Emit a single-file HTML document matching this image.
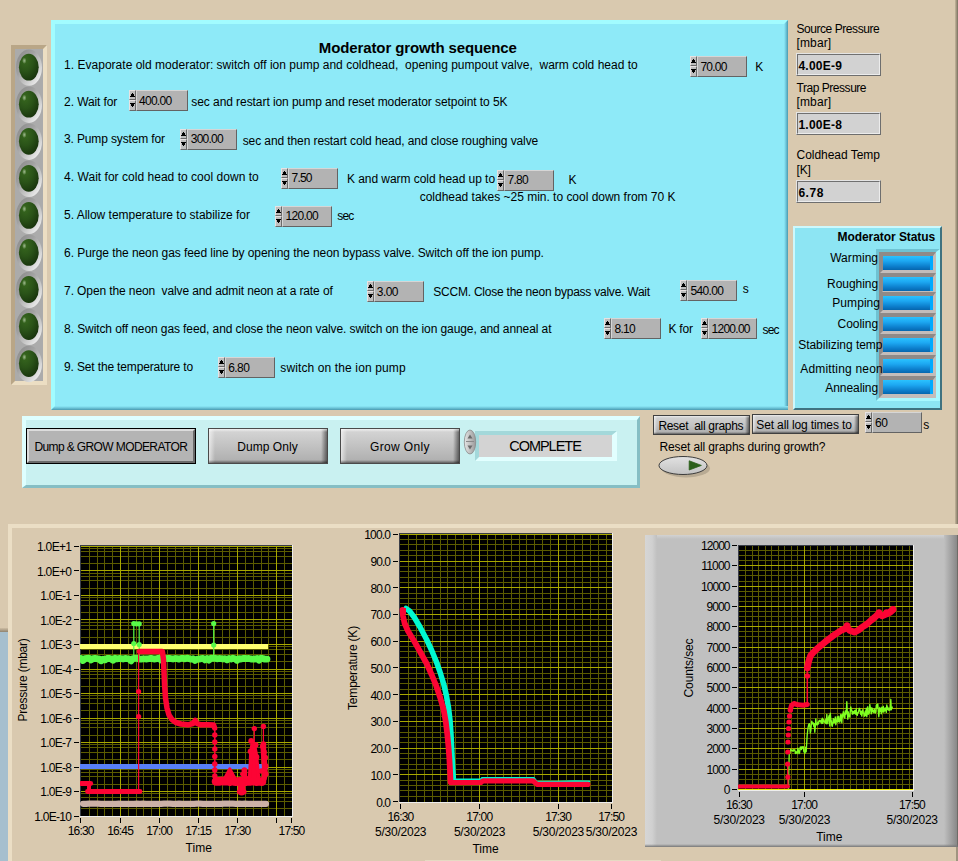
<!DOCTYPE html>
<html><head><meta charset="utf-8"><title>Moderator growth sequence</title>
<style>
html,body{margin:0;padding:0}
body{width:958px;height:861px;background:#D9C9AF;position:relative;overflow:hidden;
 font-family:"Liberation Sans",sans-serif;font-size:12px;color:#000;line-height:1}
.a{position:absolute}
.t{position:absolute;white-space:pre;line-height:1}
.num{position:absolute;height:21px}
.num .sp{position:absolute;left:0;top:0;width:7px;height:21px;background:#C8C8C8}
.num .sp i{position:absolute;left:0;width:7px;box-sizing:border-box;background:#BEBEBE;border-top:1px solid #E8E2E2;border-left:1px solid #E8E2E2;border-bottom:1px solid #6A6A6A;border-right:1px solid #6A6A6A}
.num .sp i.u{top:0;height:10px}
.num .sp i.d{top:10px;height:11px}
.num .sp i:after{content:"";position:absolute;left:2px;width:1px;height:1px;background:#000}
.num .sp i.u:after{top:2px;box-shadow:-1px 1px #000,0 1px #000,1px 1px #000,-1px 2px #000,0 2px #000,1px 2px #000,-2px 3px #000,-1px 3px #000,0 3px #000,1px 3px #000,2px 3px #000}
.num .sp i.d:after{top:5px;box-shadow:-1px -1px #000,0 -1px #000,1px -1px #000,-1px -2px #000,0 -2px #000,1px -2px #000,-2px -3px #000,-1px -3px #000,0 -3px #000,1px -3px #000,2px -3px #000}
.num .f{position:absolute;left:7px;top:0;height:21px;box-sizing:border-box;background:#B3B3B3;border-top:1px solid #D6D6D6;border-left:1px solid #D6D6D6;border-bottom:1px solid #636363;border-right:1px solid #636363}
.ind{position:absolute;box-sizing:border-box;background:#D2D2D2;border:1px solid;border-color:#E4E4E4 #6E6E6E #6E6E6E #E4E4E4}
.ind:after{content:"";position:absolute;left:0;top:0;right:0;bottom:0;border:1px solid;border-color:#707070 #ECECEC #ECECEC #707070}
.btn{position:absolute;box-sizing:border-box;border:1px solid #4A4A4A;background:linear-gradient(#D6D6D6,#C4C4C4 45%,#ADADAD)}
</style></head>
<body>
<div class="a" style="left:51px;top:20px;width:737px;height:390px;background:#8EEAF8;box-sizing:border-box;border-style:solid;border-width:4px 0 0 4px;border-color:#A2FCFF"></div>
<div class="a" style="left:784px;top:20px;width:4px;height:390px;background:linear-gradient(90deg,#8EEAF8,#6CC4D8 50%,#4A99AF)"></div>
<div class="a" style="left:51px;top:406px;width:737px;height:4px;background:linear-gradient(#8EEAF8,#6CC4D8 50%,#4A99AF)"></div>
<div class="a" style="left:51px;top:406px;width:0;height:0;border-left:4px solid #A2FCFF;border-bottom:4px solid transparent"></div>
<div class="a" style="left:784px;top:20px;width:0;height:0;border-top:4px solid #A2FCFF;border-right:4px solid transparent"></div>
<div class="a" style="left:11px;top:45px;width:36px;height:340px;box-sizing:border-box;background:#ABABAB;border-style:solid;border-width:4px;border-color:#B9A687 #ECDEC3 #ECDEC3 #B9A687"></div>
<svg class="a" style="left:12px;top:46px" width="35" height="340" viewBox="12 46 35 340"><defs><linearGradient id="bz" x1="0" y1="0" x2="1" y2="1"><stop offset="0" stop-color="#868686"/><stop offset=".38" stop-color="#A2A2A2"/><stop offset=".62" stop-color="#C6C6C6"/><stop offset="1" stop-color="#FFFFFF"/></linearGradient><radialGradient id="lg" cx=".32" cy=".25" r=".9"><stop offset="0" stop-color="#38681F"/><stop offset=".45" stop-color="#2A5318"/><stop offset="1" stop-color="#142C0A"/></radialGradient><radialGradient id="hl" cx=".5" cy=".5" r=".5"><stop offset="0" stop-color="#C9DDBC" stop-opacity=".7"/><stop offset="1" stop-color="#DDEBD2" stop-opacity="0"/></radialGradient></defs><ellipse cx="29" cy="67.6" rx="13" ry="18.2" fill="url(#bz)"/><ellipse cx="28.8" cy="67.2" rx="9.9" ry="13.4" fill="url(#lg)"/><ellipse cx="24.3" cy="60.7" rx="2.2" ry="3.2" fill="url(#hl)"/><ellipse cx="29" cy="104.7" rx="13" ry="18.2" fill="url(#bz)"/><ellipse cx="28.8" cy="104.2" rx="9.9" ry="13.4" fill="url(#lg)"/><ellipse cx="24.3" cy="97.8" rx="2.2" ry="3.2" fill="url(#hl)"/><ellipse cx="29" cy="141.7" rx="13" ry="18.2" fill="url(#bz)"/><ellipse cx="28.8" cy="141.3" rx="9.9" ry="13.4" fill="url(#lg)"/><ellipse cx="24.3" cy="134.8" rx="2.2" ry="3.2" fill="url(#hl)"/><ellipse cx="29" cy="178.8" rx="13" ry="18.2" fill="url(#bz)"/><ellipse cx="28.8" cy="178.3" rx="9.9" ry="13.4" fill="url(#lg)"/><ellipse cx="24.3" cy="171.8" rx="2.2" ry="3.2" fill="url(#hl)"/><ellipse cx="29" cy="215.8" rx="13" ry="18.2" fill="url(#bz)"/><ellipse cx="28.8" cy="215.4" rx="9.9" ry="13.4" fill="url(#lg)"/><ellipse cx="24.3" cy="208.9" rx="2.2" ry="3.2" fill="url(#hl)"/><ellipse cx="29" cy="252.8" rx="13" ry="18.2" fill="url(#bz)"/><ellipse cx="28.8" cy="252.4" rx="9.9" ry="13.4" fill="url(#lg)"/><ellipse cx="24.3" cy="245.9" rx="2.2" ry="3.2" fill="url(#hl)"/><ellipse cx="29" cy="289.9" rx="13" ry="18.2" fill="url(#bz)"/><ellipse cx="28.8" cy="289.5" rx="9.9" ry="13.4" fill="url(#lg)"/><ellipse cx="24.3" cy="283.0" rx="2.2" ry="3.2" fill="url(#hl)"/><ellipse cx="29" cy="326.9" rx="13" ry="18.2" fill="url(#bz)"/><ellipse cx="28.8" cy="326.5" rx="9.9" ry="13.4" fill="url(#lg)"/><ellipse cx="24.3" cy="320.0" rx="2.2" ry="3.2" fill="url(#hl)"/><ellipse cx="29" cy="364.0" rx="13" ry="18.2" fill="url(#bz)"/><ellipse cx="28.8" cy="363.6" rx="9.9" ry="13.4" fill="url(#lg)"/><ellipse cx="24.3" cy="357.1" rx="2.2" ry="3.2" fill="url(#hl)"/></svg>
<div class="num" style="left:690px;top:56px;width:57px"><div class="sp"><i class="u"></i><i class="d"></i></div><div class="f" style="width:50px"></div></div>
<div class="num" style="left:129px;top:90px;width:59px"><div class="sp"><i class="u"></i><i class="d"></i></div><div class="f" style="width:52px"></div></div>
<div class="num" style="left:180px;top:129px;width:57px"><div class="sp"><i class="u"></i><i class="d"></i></div><div class="f" style="width:50px"></div></div>
<div class="num" style="left:281px;top:168px;width:57px"><div class="sp"><i class="u"></i><i class="d"></i></div><div class="f" style="width:50px"></div></div>
<div class="num" style="left:497px;top:170px;width:57px"><div class="sp"><i class="u"></i><i class="d"></i></div><div class="f" style="width:50px"></div></div>
<div class="num" style="left:275px;top:206px;width:57px"><div class="sp"><i class="u"></i><i class="d"></i></div><div class="f" style="width:50px"></div></div>
<div class="num" style="left:367px;top:281px;width:57px"><div class="sp"><i class="u"></i><i class="d"></i></div><div class="f" style="width:50px"></div></div>
<div class="num" style="left:680px;top:280px;width:57px"><div class="sp"><i class="u"></i><i class="d"></i></div><div class="f" style="width:50px"></div></div>
<div class="num" style="left:604px;top:318px;width:57px"><div class="sp"><i class="u"></i><i class="d"></i></div><div class="f" style="width:50px"></div></div>
<div class="num" style="left:701px;top:318px;width:56px"><div class="sp"><i class="u"></i><i class="d"></i></div><div class="f" style="width:49px"></div></div>
<div class="num" style="left:218px;top:357px;width:57px"><div class="sp"><i class="u"></i><i class="d"></i></div><div class="f" style="width:50px"></div></div>
<div class="ind" style="left:796px;top:53px;width:85px;height:23px"></div>
<div class="ind" style="left:796px;top:112px;width:85px;height:23px"></div>
<div class="ind" style="left:796px;top:180px;width:85px;height:23px"></div>
<div class="a" style="left:793px;top:226px;width:149px;height:184px;background:#8DE5F3;box-sizing:border-box;border-style:solid;border-width:2px 2px 2px 2px;border-color:#CDF8FC #3F7280 #3F7280 #CDF8FC"></div>
<div class="a" style="left:876px;top:249px;width:64px;height:152px;box-sizing:border-box;background:#8DE5F3;border-style:solid;border-width:3px 4px 3px 3px;border-color:#6FC2D2 #A8F8FF #A8F8FF #6FC2D2"></div>
<div class="a" style="left:879px;top:252px;width:57px;height:22px;box-sizing:border-box;border-style:solid;border-width:4px 3px 4px 4px;border-color:#8F8A88 #C3BDBB #C3BDBB #8F8A88;background:linear-gradient(#2AC2FF,#1DA8F2 35%,#0C7DCB 75%,#0566AE)"><div class="a" style="right:0;top:0;width:3px;height:14px;background:#00AAFF"></div></div>
<div class="a" style="left:879px;top:273px;width:57px;height:22px;box-sizing:border-box;border-style:solid;border-width:4px 3px 4px 4px;border-color:#8F8A88 #C3BDBB #C3BDBB #8F8A88;background:linear-gradient(#2AC2FF,#1DA8F2 35%,#0C7DCB 75%,#0566AE)"><div class="a" style="right:0;top:0;width:3px;height:14px;background:#00AAFF"></div></div>
<div class="a" style="left:879px;top:292px;width:57px;height:22px;box-sizing:border-box;border-style:solid;border-width:4px 3px 4px 4px;border-color:#8F8A88 #C3BDBB #C3BDBB #8F8A88;background:linear-gradient(#2AC2FF,#1DA8F2 35%,#0C7DCB 75%,#0566AE)"><div class="a" style="right:0;top:0;width:3px;height:14px;background:#00AAFF"></div></div>
<div class="a" style="left:879px;top:313px;width:57px;height:22px;box-sizing:border-box;border-style:solid;border-width:4px 3px 4px 4px;border-color:#8F8A88 #C3BDBB #C3BDBB #8F8A88;background:linear-gradient(#2AC2FF,#1DA8F2 35%,#0C7DCB 75%,#0566AE)"><div class="a" style="right:0;top:0;width:3px;height:14px;background:#00AAFF"></div></div>
<div class="a" style="left:879px;top:334px;width:57px;height:22px;box-sizing:border-box;border-style:solid;border-width:4px 3px 4px 4px;border-color:#8F8A88 #C3BDBB #C3BDBB #8F8A88;background:linear-gradient(#2AC2FF,#1DA8F2 35%,#0C7DCB 75%,#0566AE)"><div class="a" style="right:0;top:0;width:3px;height:14px;background:#00AAFF"></div></div>
<div class="a" style="left:879px;top:355px;width:57px;height:22px;box-sizing:border-box;border-style:solid;border-width:4px 3px 4px 4px;border-color:#8F8A88 #C3BDBB #C3BDBB #8F8A88;background:linear-gradient(#2AC2FF,#1DA8F2 35%,#0C7DCB 75%,#0566AE)"><div class="a" style="right:0;top:0;width:3px;height:14px;background:#00AAFF"></div></div>
<div class="a" style="left:879px;top:376px;width:57px;height:22px;box-sizing:border-box;border-style:solid;border-width:4px 3px 4px 4px;border-color:#8F8A88 #C3BDBB #C3BDBB #8F8A88;background:linear-gradient(#2AC2FF,#1DA8F2 35%,#0C7DCB 75%,#0566AE)"><div class="a" style="right:0;top:0;width:3px;height:14px;background:#00AAFF"></div></div>
<div class="a" style="left:22px;top:416px;width:618px;height:72px;background:#C9F1F1;box-sizing:border-box;border-style:solid;border-width:4px 3px 3px 4px;border-color:#DEFFFF #86BEC4 #86BEC4 #DEFFFF"></div>
<div class="a" style="left:26px;top:428px;width:170px;height:36px;box-sizing:border-box;border:1px solid #000;background:#000"><div class="a" style="left:0;top:0;right:0;bottom:0;background:#B4B4B4;border-style:solid;border-width:2px;border-color:#DCDCDC #6A6A6A #6A6A6A #DCDCDC"></div></div>
<div class="btn" style="left:208px;top:428px;width:120px;height:36px"><div class="a" style="left:0;top:0;width:6px;height:100%;background:linear-gradient(90deg,rgba(255,255,255,.6),rgba(255,255,255,0))"></div><div class="a" style="right:0;top:0;width:6px;height:100%;background:linear-gradient(90deg,rgba(0,0,0,0),rgba(0,0,0,.5))"></div><div class="a" style="left:0;top:0;width:100%;height:3px;background:linear-gradient(rgba(255,255,255,.6),rgba(255,255,255,0))"></div><div class="a" style="left:0;bottom:0;width:100%;height:3px;background:linear-gradient(rgba(0,0,0,0),rgba(0,0,0,.45))"></div></div>
<div class="btn" style="left:340px;top:428px;width:120px;height:36px"><div class="a" style="left:0;top:0;width:6px;height:100%;background:linear-gradient(90deg,rgba(255,255,255,.6),rgba(255,255,255,0))"></div><div class="a" style="right:0;top:0;width:6px;height:100%;background:linear-gradient(90deg,rgba(0,0,0,0),rgba(0,0,0,.5))"></div><div class="a" style="left:0;top:0;width:100%;height:3px;background:linear-gradient(rgba(255,255,255,.6),rgba(255,255,255,0))"></div><div class="a" style="left:0;bottom:0;width:100%;height:3px;background:linear-gradient(rgba(0,0,0,0),rgba(0,0,0,.45))"></div></div>
<div class="a" style="left:475px;top:431px;width:142px;height:30px;box-sizing:border-box;background:#D3D3D3;border-style:solid;border-width:4px 5px 4px 4px;border-color:#A3D8DA #E2FFFF #E2FFFF #A3D8DA"></div>
<svg class="a" style="left:463px;top:429px" width="14" height="26" viewBox="0 0 14 26"><defs><linearGradient id="rg" x1="0" y1="0" x2="1" y2="0"><stop offset="0" stop-color="#E6E6E6"/><stop offset="1" stop-color="#9A9A9A"/></linearGradient></defs><ellipse cx="7" cy="13" rx="5.7" ry="12" fill="url(#rg)" stroke="#8A8A8A" stroke-width=".8"/><path d="M3 12.5H11" stroke="#8A8A8A" stroke-width="1"/><path d="M7 5.5L9.5 9.5H4.5Z M7 20.5L9.5 16.5H4.5Z" fill="#6A6A6A"/></svg>
<div class="a" style="left:653px;top:415px;width:97px;height:20px;box-sizing:border-box;border:1px solid #404040;background:linear-gradient(#D2D2D2,#C4C4C4 50%,#ABABAB)"><div class="a" style="left:0;top:0;width:3px;height:100%;background:linear-gradient(90deg,rgba(255,255,255,.6),rgba(255,255,255,0))"></div><div class="a" style="right:0;top:0;width:4px;height:100%;background:linear-gradient(90deg,rgba(0,0,0,0),rgba(0,0,0,.5))"></div><div class="a" style="left:0;top:0;width:100%;height:2px;background:linear-gradient(rgba(255,255,255,.55),rgba(255,255,255,0))"></div><div class="a" style="left:0;bottom:0;width:100%;height:2px;background:linear-gradient(rgba(0,0,0,0),rgba(0,0,0,.45))"></div></div>
<div class="a" style="left:752px;top:414px;width:107px;height:20px;box-sizing:border-box;border:1px solid #404040;background:linear-gradient(#D2D2D2,#C4C4C4 50%,#ABABAB)"><div class="a" style="left:0;top:0;width:3px;height:100%;background:linear-gradient(90deg,rgba(255,255,255,.6),rgba(255,255,255,0))"></div><div class="a" style="right:0;top:0;width:4px;height:100%;background:linear-gradient(90deg,rgba(0,0,0,0),rgba(0,0,0,.5))"></div><div class="a" style="left:0;top:0;width:100%;height:2px;background:linear-gradient(rgba(255,255,255,.55),rgba(255,255,255,0))"></div><div class="a" style="left:0;bottom:0;width:100%;height:2px;background:linear-gradient(rgba(0,0,0,0),rgba(0,0,0,.45))"></div></div>
<div class="num" style="left:865px;top:412px;width:57px"><div class="sp"><i class="u"></i><i class="d"></i></div><div class="f" style="width:50px"></div></div>
<svg class="a" style="left:655px;top:453px" width="60" height="28" viewBox="655 453 60 28"><defs><linearGradient id="ov" x1="0" y1="0" x2="0" y2="1"><stop offset="0" stop-color="#E2E2E2"/><stop offset="1" stop-color="#C2C2C2"/></linearGradient></defs><ellipse cx="686" cy="468.5" rx="24" ry="9" fill="#9C8F7B" opacity=".55"/><ellipse cx="683" cy="465.5" rx="24" ry="9" fill="url(#ov)" stroke="#3C3C3C" stroke-width="1"/><path d="M689.2 460.8L701.4 465.4L689.2 470Z" fill="#2B5F19" stroke="#2B5F19" stroke-width=".8" stroke-linejoin="round"/></svg>
<div class="a" style="left:955px;top:0;width:3px;height:524px;background:linear-gradient(90deg,#C4B69C,#9F937D 50%,#786F5F)"></div>
<div class="a" style="left:8px;top:524px;width:960px;height:345px;box-sizing:border-box;border-style:solid;border-width:4px;border-color:#EBDEC5 #B7A98F #B7A98F #EBDEC5"></div>
<div class="a" style="left:0;top:628px;width:8px;height:4px;background:linear-gradient(#CDBDA3,#8F836F)"></div>
<div class="a" style="left:0;top:632px;width:8px;height:229px;background:#A6BFCE"></div>
<div class="a" style="left:425px;top:860px;width:236px;height:1px;background:#E6DAC3"></div>
<div class="a" style="left:645px;top:535px;width:313px;height:312px;background:#C0C0C0"></div>
<div class="a" style="left:645px;top:535px;width:313px;height:4px;background:linear-gradient(#D2D2D2,#C0C0C0)"></div>
<div class="a" style="left:645px;top:535px;width:12px;height:312px;background:linear-gradient(90deg,#D6D6D6,#D0D0D0 60%,#C0C0C0)"></div>
<div class="a" style="left:944px;top:535px;width:14px;height:312px;background:linear-gradient(90deg,#C0C0C0,#8A8A8A 90%,#5E5A52)"></div>
<div class="a" style="left:645px;top:844px;width:313px;height:3px;background:linear-gradient(rgba(120,120,120,0),#787878)"></div>
<div class="a" style="left:956px;top:847px;width:2px;height:14px;background:#A09480"></div>
<svg class="a" style="left:80px;top:545px" width="213" height="272" viewBox="80 545 213 272"><rect x="80" y="545" width="212" height="271" fill="#000"/><g shape-rendering="crispEdges"><rect x="89" y="545" width="1" height="271" fill="#5C5C00"/><rect x="97" y="545" width="1" height="271" fill="#5C5C00"/><rect x="104" y="545" width="1" height="271" fill="#5C5C00"/><rect x="112" y="545" width="1" height="271" fill="#5C5C00"/><rect x="128" y="545" width="1" height="271" fill="#5C5C00"/><rect x="136" y="545" width="1" height="271" fill="#5C5C00"/><rect x="143" y="545" width="1" height="271" fill="#5C5C00"/><rect x="151" y="545" width="1" height="271" fill="#5C5C00"/><rect x="167" y="545" width="1" height="271" fill="#5C5C00"/><rect x="175" y="545" width="1" height="271" fill="#5C5C00"/><rect x="183" y="545" width="1" height="271" fill="#5C5C00"/><rect x="190" y="545" width="1" height="271" fill="#5C5C00"/><rect x="206" y="545" width="1" height="271" fill="#5C5C00"/><rect x="214" y="545" width="1" height="271" fill="#5C5C00"/><rect x="222" y="545" width="1" height="271" fill="#5C5C00"/><rect x="229" y="545" width="1" height="271" fill="#5C5C00"/><rect x="245" y="545" width="1" height="271" fill="#5C5C00"/><rect x="253" y="545" width="1" height="271" fill="#5C5C00"/><rect x="261" y="545" width="1" height="271" fill="#5C5C00"/><rect x="268" y="545" width="1" height="271" fill="#5C5C00"/><rect x="284" y="545" width="1" height="271" fill="#5C5C00"/><rect x="80" y="563" width="212" height="1" fill="#5C5C00"/><rect x="80" y="556" width="212" height="1" fill="#5C5C00"/><rect x="80" y="551" width="212" height="1" fill="#5C5C00"/><rect x="80" y="548" width="212" height="1" fill="#5C5C00"/><rect x="80" y="588" width="212" height="1" fill="#5C5C00"/><rect x="80" y="580" width="212" height="1" fill="#5C5C00"/><rect x="80" y="576" width="212" height="1" fill="#5C5C00"/><rect x="80" y="573" width="212" height="1" fill="#5C5C00"/><rect x="80" y="612" width="212" height="1" fill="#5C5C00"/><rect x="80" y="605" width="212" height="1" fill="#5C5C00"/><rect x="80" y="600" width="212" height="1" fill="#5C5C00"/><rect x="80" y="597" width="212" height="1" fill="#5C5C00"/><rect x="80" y="637" width="212" height="1" fill="#5C5C00"/><rect x="80" y="629" width="212" height="1" fill="#5C5C00"/><rect x="80" y="625" width="212" height="1" fill="#5C5C00"/><rect x="80" y="622" width="212" height="1" fill="#5C5C00"/><rect x="80" y="661" width="212" height="1" fill="#5C5C00"/><rect x="80" y="654" width="212" height="1" fill="#5C5C00"/><rect x="80" y="649" width="212" height="1" fill="#5C5C00"/><rect x="80" y="646" width="212" height="1" fill="#5C5C00"/><rect x="80" y="686" width="212" height="1" fill="#5C5C00"/><rect x="80" y="678" width="212" height="1" fill="#5C5C00"/><rect x="80" y="674" width="212" height="1" fill="#5C5C00"/><rect x="80" y="671" width="212" height="1" fill="#5C5C00"/><rect x="80" y="710" width="212" height="1" fill="#5C5C00"/><rect x="80" y="703" width="212" height="1" fill="#5C5C00"/><rect x="80" y="698" width="212" height="1" fill="#5C5C00"/><rect x="80" y="695" width="212" height="1" fill="#5C5C00"/><rect x="80" y="735" width="212" height="1" fill="#5C5C00"/><rect x="80" y="727" width="212" height="1" fill="#5C5C00"/><rect x="80" y="723" width="212" height="1" fill="#5C5C00"/><rect x="80" y="720" width="212" height="1" fill="#5C5C00"/><rect x="80" y="759" width="212" height="1" fill="#5C5C00"/><rect x="80" y="752" width="212" height="1" fill="#5C5C00"/><rect x="80" y="747" width="212" height="1" fill="#5C5C00"/><rect x="80" y="744" width="212" height="1" fill="#5C5C00"/><rect x="80" y="784" width="212" height="1" fill="#5C5C00"/><rect x="80" y="776" width="212" height="1" fill="#5C5C00"/><rect x="80" y="772" width="212" height="1" fill="#5C5C00"/><rect x="80" y="769" width="212" height="1" fill="#5C5C00"/><rect x="80" y="808" width="212" height="1" fill="#5C5C00"/><rect x="80" y="801" width="212" height="1" fill="#5C5C00"/><rect x="80" y="797" width="212" height="1" fill="#5C5C00"/><rect x="80" y="793" width="212" height="1" fill="#5C5C00"/><rect x="120" y="545" width="1" height="271" fill="#A8A800"/><rect x="159" y="545" width="1" height="271" fill="#A8A800"/><rect x="198" y="545" width="1" height="271" fill="#A8A800"/><rect x="237" y="545" width="1" height="271" fill="#A8A800"/><rect x="276" y="545" width="1" height="271" fill="#A8A800"/><rect x="80" y="546" width="212" height="1" fill="#A8A800"/><rect x="80" y="570" width="212" height="1" fill="#A8A800"/><rect x="80" y="595" width="212" height="1" fill="#A8A800"/><rect x="80" y="619" width="212" height="1" fill="#A8A800"/><rect x="80" y="644" width="212" height="1" fill="#A8A800"/><rect x="80" y="669" width="212" height="1" fill="#A8A800"/><rect x="80" y="693" width="212" height="1" fill="#A8A800"/><rect x="80" y="718" width="212" height="1" fill="#A8A800"/><rect x="80" y="742" width="212" height="1" fill="#A8A800"/><rect x="80" y="767" width="212" height="1" fill="#A8A800"/><rect x="80" y="791" width="212" height="1" fill="#A8A800"/><rect x="80" y="545" width="1" height="271" fill="#3A3E48"/><rect x="80" y="545" width="212" height="1" fill="#3A3E48"/><rect x="292" y="545" width="1" height="272" fill="#EEEEEE"/><rect x="80" y="816" width="213" height="1" fill="#EEEEEE"/></g><svg x="80" y="545" width="212" height="271" viewBox="80 545 212 271"><rect x="80" y="644" width="188" height="5" fill="#FFFF70"/><rect x="80" y="764" width="188" height="5" fill="#5880F8"/><polyline points="81.0,658.5 83.0,660.5 85.0,658.7 87.0,658.3 89.0,658.2 91.0,659.9 93.0,658.6 95.0,658.3 97.0,658.8 99.0,658.8 101.0,660.8 103.0,659.1 105.0,659.9 107.0,658.5 109.0,658.4 111.0,658.8 113.0,660.3 115.0,658.3 117.0,658.9 119.0,658.5 121.0,658.7 123.0,659.0 125.0,658.4 127.0,658.7 129.0,658.9 131.0,660.8 133.0,658.6 135.0,658.4 137.0,658.2 139.0,659.0 141.0,659.1 143.0,658.9 145.0,658.8 147.0,659.0 149.0,658.7 151.0,658.3 153.0,658.8 155.0,659.0 157.0,658.6 159.0,658.2 161.0,660.0 163.0,658.3 165.0,658.3 167.0,658.6 169.0,658.3 171.0,658.7 173.0,659.0 175.0,658.5 177.0,658.6 179.0,659.2 181.0,658.4 183.0,658.4 185.0,658.8 187.0,658.2 189.0,658.6 191.0,659.2 193.0,658.7 195.0,660.5 197.0,659.1 199.0,659.1 201.0,658.6 203.0,658.3 205.0,659.9 207.0,658.4 209.0,660.1 211.0,658.2 213.0,658.3 215.0,658.2 217.0,658.8 219.0,658.5 221.0,658.6 223.0,659.0 225.0,658.7 227.0,659.9 229.0,658.5 231.0,659.0 233.0,658.2 235.0,658.7 237.0,660.3 239.0,658.7 241.0,659.1 243.0,658.5 245.0,658.4 247.0,658.7 249.0,658.5 251.0,659.0 253.0,659.1 255.0,659.0 257.0,658.4 259.0,660.2 261.0,658.2 263.0,658.5 265.0,659.2 267.0,659.1" fill="none" stroke="#58FA48" stroke-width="6.8" stroke-linejoin="round" stroke-linecap="round" /><polyline points="133.8,659.0 133.8,623.5 139.2,623.5 139.2,659.0" fill="none" stroke="#58FA48" stroke-width="1.2" stroke-linejoin="round" stroke-linecap="round" /><circle cx="133.8" cy="623.5" r="2.6" fill="#58FA48"/><circle cx="136.5" cy="623.8" r="2.6" fill="#58FA48"/><circle cx="139.2" cy="623.8" r="2.6" fill="#58FA48"/><circle cx="133.8" cy="643.5" r="2.6" fill="#58FA48"/><circle cx="139.2" cy="644.5" r="2.6" fill="#58FA48"/><polyline points="213.7,659.0 213.7,623.5" fill="none" stroke="#58FA48" stroke-width="1.2" stroke-linejoin="round" stroke-linecap="round" /><circle cx="213.7" cy="623.5" r="2.6" fill="#58FA48"/><circle cx="213.7" cy="645.0" r="2.6" fill="#58FA48"/><polyline points="83.0,803.9 86.0,803.8 89.0,803.7 92.0,803.7 95.0,803.7 98.0,803.7 101.0,803.8 104.0,803.9 107.0,803.9 110.0,803.8 113.0,803.8 116.0,803.9 119.0,803.7 122.0,803.8 125.0,803.9 128.0,803.9 131.0,803.9 134.0,803.8 137.0,803.7 140.0,803.9 143.0,803.7 146.0,803.9 149.0,803.9 152.0,803.8 155.0,803.8 158.0,803.9 161.0,803.9 164.0,803.7 167.0,803.7 170.0,803.7 173.0,803.9 176.0,803.9 179.0,803.7 182.0,803.9 185.0,803.9 188.0,803.8 191.0,803.8 194.0,803.8 197.0,803.7 200.0,803.7 203.0,803.9 206.0,803.8 209.0,803.8 212.0,803.9 215.0,803.8 218.0,803.9 221.0,803.9 224.0,803.7 227.0,803.7 230.0,803.7 233.0,803.7 236.0,803.8 239.0,803.7 242.0,803.8 245.0,803.7 248.0,803.9 251.0,803.8 254.0,803.8 257.0,803.8 260.0,803.9 263.0,803.8 266.0,803.9" fill="none" stroke="#CCB1A7" stroke-width="6.2" stroke-linejoin="round" stroke-linecap="round" /><polyline points="81.0,783.5 90.7,783.5" fill="none" stroke="#FC0434" stroke-width="4.9" stroke-linejoin="round" stroke-linecap="round" /><polyline points="89.0,784.0 89.0,791.0" fill="none" stroke="#FC0434" stroke-width="4" stroke-linejoin="round" stroke-linecap="round" /><polyline points="87.5,791.5 140.0,791.5" fill="none" stroke="#FC0434" stroke-width="4.9" stroke-linejoin="round" stroke-linecap="round" /><polyline points="138.6,791.5 138.6,651.5" fill="none" stroke="#FC0434" stroke-width="1.2" stroke-linejoin="round" stroke-linecap="round" /><circle cx="138.6" cy="716.5" r="2.6" fill="#FC0434"/><circle cx="138.6" cy="691.5" r="2.6" fill="#FC0434"/><polyline points="139.5,651.5 162.0,651.5" fill="none" stroke="#FC0434" stroke-width="5.5" stroke-linejoin="round" stroke-linecap="round" /><polyline points="162.5,652.0 163.5,660.0 164.0,672.0 164.5,684.0 165.5,698.0 167.0,708.0 169.0,715.0 172.0,719.5 176.0,722.5 181.0,724.0 188.0,724.8 193.0,723.5 195.3,720.5 197.0,723.5 201.0,724.8 208.0,724.8 213.6,725.0 214.6,728.0" fill="none" stroke="#FC0434" stroke-width="5.5" stroke-linejoin="round" stroke-linecap="round" /><polyline points="214.8,729.0 214.8,783.0" fill="none" stroke="#FC0434" stroke-width="1.5" stroke-linejoin="round" stroke-linecap="round" /><circle cx="214.8" cy="735.0" r="2.7" fill="#FC0434"/><circle cx="214.8" cy="742.0" r="2.7" fill="#FC0434"/><circle cx="214.8" cy="749.0" r="2.7" fill="#FC0434"/><circle cx="214.8" cy="756.5" r="2.7" fill="#FC0434"/><circle cx="214.8" cy="764.0" r="2.7" fill="#FC0434"/><circle cx="214.8" cy="770.0" r="2.7" fill="#FC0434"/><circle cx="214.8" cy="776.0" r="2.7" fill="#FC0434"/><polyline points="216.0,781.4 218.0,781.4 220.0,781.4 222.0,780.9 224.0,781.3 226.0,781.1 228.0,780.9 230.0,781.7 232.0,781.1 234.0,781.4 236.0,781.6 238.0,781.5 240.0,781.2 242.0,781.4 244.0,781.5 246.0,781.7 248.0,781.0 250.0,781.5 252.0,781.1 254.0,781.2 256.0,781.7 258.0,781.4 260.0,781.5 262.0,781.7" fill="none" stroke="#FC0434" stroke-width="8.6" stroke-linejoin="round" stroke-linecap="round" /><polygon points="224.8,778 229.8,768.8 234.8,778" fill="#FC0434" stroke="#FC0434" stroke-width="3" stroke-linejoin="round"/><polyline points="241.6,784.0 241.6,791.8" fill="none" stroke="#FC0434" stroke-width="7.5" stroke-linejoin="round" stroke-linecap="round" /><polyline points="239.6,791.8 243.8,791.8" fill="none" stroke="#FC0434" stroke-width="5.5" stroke-linejoin="round" stroke-linecap="round" /><polyline points="244.4,770.0 244.4,779.0" fill="none" stroke="#FC0434" stroke-width="5.6" stroke-linejoin="round" stroke-linecap="round" /><polyline points="242.0,774.0 246.5,778.0" fill="none" stroke="#FC0434" stroke-width="4" stroke-linejoin="round" stroke-linecap="round" /><polygon points="249.6,779 250.4,764 250.8,754 252,745 254.8,747 256.3,755 257.4,766 258.6,779" fill="#FC0434" stroke="#FC0434" stroke-width="3.6" stroke-linejoin="round"/><circle cx="251.2" cy="741.0" r="2.9" fill="#FC0434"/><circle cx="255.6" cy="745.0" r="2.9" fill="#FC0434"/><circle cx="250.6" cy="751.3" r="2.9" fill="#FC0434"/><circle cx="256.5" cy="757.0" r="2.9" fill="#FC0434"/><polyline points="254.3,728.6 254.3,746.0" fill="none" stroke="#FC0434" stroke-width="1.2" stroke-linejoin="round" stroke-linecap="round" /><polyline points="252.3,741.0 252.3,752.0" fill="none" stroke="#FC0434" stroke-width="1.0" stroke-linejoin="round" stroke-linecap="round" /><circle cx="254.3" cy="728.6" r="2.7" fill="#FC0434"/><polyline points="263.4,726.5 263.4,744.0" fill="none" stroke="#FC0434" stroke-width="1.2" stroke-linejoin="round" stroke-linecap="round" /><circle cx="263.4" cy="726.5" r="2.7" fill="#FC0434"/><polyline points="263.4,744.0 263.4,750.0 263.9,757.0 264.6,765.0 265.0,773.0 264.0,779.0" fill="none" stroke="#FC0434" stroke-width="5.6" stroke-linejoin="round" stroke-linecap="round" /><circle cx="262.6" cy="746.5" r="2.7" fill="#FC0434"/><circle cx="264.2" cy="752.0" r="2.7" fill="#FC0434"/><circle cx="265.4" cy="757.5" r="2.7" fill="#FC0434"/><circle cx="265.8" cy="766.0" r="2.7" fill="#FC0434"/><circle cx="266.0" cy="774.0" r="2.7" fill="#FC0434"/><circle cx="261.4" cy="771.0" r="2.7" fill="#FC0434"/></svg></svg>
<div class="a" style="left:74px;top:546px;width:5px;height:1px;background:#000"></div>
<div class="a" style="left:74px;top:570px;width:5px;height:1px;background:#000"></div>
<div class="a" style="left:74px;top:595px;width:5px;height:1px;background:#000"></div>
<div class="a" style="left:74px;top:619px;width:5px;height:1px;background:#000"></div>
<div class="a" style="left:74px;top:644px;width:5px;height:1px;background:#000"></div>
<div class="a" style="left:74px;top:669px;width:5px;height:1px;background:#000"></div>
<div class="a" style="left:74px;top:693px;width:5px;height:1px;background:#000"></div>
<div class="a" style="left:74px;top:718px;width:5px;height:1px;background:#000"></div>
<div class="a" style="left:74px;top:742px;width:5px;height:1px;background:#000"></div>
<div class="a" style="left:74px;top:767px;width:5px;height:1px;background:#000"></div>
<div class="a" style="left:74px;top:791px;width:5px;height:1px;background:#000"></div>
<div class="a" style="left:74px;top:816px;width:5px;height:1px;background:#000"></div>
<div class="a" style="left:80px;top:818px;width:1px;height:5px;background:#000"></div>
<div class="a" style="left:120px;top:818px;width:1px;height:5px;background:#000"></div>
<div class="a" style="left:159px;top:818px;width:1px;height:5px;background:#000"></div>
<div class="a" style="left:198px;top:818px;width:1px;height:5px;background:#000"></div>
<div class="a" style="left:237px;top:818px;width:1px;height:5px;background:#000"></div>
<div class="a" style="left:276px;top:818px;width:1px;height:5px;background:#000"></div>
<div class="a" style="left:291px;top:818px;width:1px;height:5px;background:#000"></div>
<svg class="a" style="left:399px;top:533px" width="214" height="270" viewBox="399 533 214 270"><rect x="399" y="533" width="213" height="269" fill="#000"/><g shape-rendering="crispEdges"><rect x="408" y="533" width="1" height="269" fill="#5C5C00"/><rect x="416" y="533" width="1" height="269" fill="#5C5C00"/><rect x="424" y="533" width="1" height="269" fill="#5C5C00"/><rect x="432" y="533" width="1" height="269" fill="#5C5C00"/><rect x="440" y="533" width="1" height="269" fill="#5C5C00"/><rect x="447" y="533" width="1" height="269" fill="#5C5C00"/><rect x="455" y="533" width="1" height="269" fill="#5C5C00"/><rect x="463" y="533" width="1" height="269" fill="#5C5C00"/><rect x="471" y="533" width="1" height="269" fill="#5C5C00"/><rect x="487" y="533" width="1" height="269" fill="#5C5C00"/><rect x="495" y="533" width="1" height="269" fill="#5C5C00"/><rect x="503" y="533" width="1" height="269" fill="#5C5C00"/><rect x="511" y="533" width="1" height="269" fill="#5C5C00"/><rect x="519" y="533" width="1" height="269" fill="#5C5C00"/><rect x="526" y="533" width="1" height="269" fill="#5C5C00"/><rect x="534" y="533" width="1" height="269" fill="#5C5C00"/><rect x="542" y="533" width="1" height="269" fill="#5C5C00"/><rect x="550" y="533" width="1" height="269" fill="#5C5C00"/><rect x="566" y="533" width="1" height="269" fill="#5C5C00"/><rect x="574" y="533" width="1" height="269" fill="#5C5C00"/><rect x="582" y="533" width="1" height="269" fill="#5C5C00"/><rect x="590" y="533" width="1" height="269" fill="#5C5C00"/><rect x="598" y="533" width="1" height="269" fill="#5C5C00"/><rect x="606" y="533" width="1" height="269" fill="#5C5C00"/><rect x="399" y="539" width="213" height="1" fill="#5C5C00"/><rect x="399" y="544" width="213" height="1" fill="#5C5C00"/><rect x="399" y="550" width="213" height="1" fill="#5C5C00"/><rect x="399" y="555" width="213" height="1" fill="#5C5C00"/><rect x="399" y="566" width="213" height="1" fill="#5C5C00"/><rect x="399" y="571" width="213" height="1" fill="#5C5C00"/><rect x="399" y="577" width="213" height="1" fill="#5C5C00"/><rect x="399" y="582" width="213" height="1" fill="#5C5C00"/><rect x="399" y="593" width="213" height="1" fill="#5C5C00"/><rect x="399" y="598" width="213" height="1" fill="#5C5C00"/><rect x="399" y="603" width="213" height="1" fill="#5C5C00"/><rect x="399" y="609" width="213" height="1" fill="#5C5C00"/><rect x="399" y="619" width="213" height="1" fill="#5C5C00"/><rect x="399" y="625" width="213" height="1" fill="#5C5C00"/><rect x="399" y="630" width="213" height="1" fill="#5C5C00"/><rect x="399" y="635" width="213" height="1" fill="#5C5C00"/><rect x="399" y="646" width="213" height="1" fill="#5C5C00"/><rect x="399" y="651" width="213" height="1" fill="#5C5C00"/><rect x="399" y="657" width="213" height="1" fill="#5C5C00"/><rect x="399" y="662" width="213" height="1" fill="#5C5C00"/><rect x="399" y="673" width="213" height="1" fill="#5C5C00"/><rect x="399" y="678" width="213" height="1" fill="#5C5C00"/><rect x="399" y="683" width="213" height="1" fill="#5C5C00"/><rect x="399" y="689" width="213" height="1" fill="#5C5C00"/><rect x="399" y="700" width="213" height="1" fill="#5C5C00"/><rect x="399" y="705" width="213" height="1" fill="#5C5C00"/><rect x="399" y="710" width="213" height="1" fill="#5C5C00"/><rect x="399" y="716" width="213" height="1" fill="#5C5C00"/><rect x="399" y="726" width="213" height="1" fill="#5C5C00"/><rect x="399" y="732" width="213" height="1" fill="#5C5C00"/><rect x="399" y="737" width="213" height="1" fill="#5C5C00"/><rect x="399" y="742" width="213" height="1" fill="#5C5C00"/><rect x="399" y="753" width="213" height="1" fill="#5C5C00"/><rect x="399" y="758" width="213" height="1" fill="#5C5C00"/><rect x="399" y="764" width="213" height="1" fill="#5C5C00"/><rect x="399" y="769" width="213" height="1" fill="#5C5C00"/><rect x="399" y="780" width="213" height="1" fill="#5C5C00"/><rect x="399" y="785" width="213" height="1" fill="#5C5C00"/><rect x="399" y="790" width="213" height="1" fill="#5C5C00"/><rect x="399" y="796" width="213" height="1" fill="#5C5C00"/><rect x="479" y="533" width="1" height="269" fill="#A8A800"/><rect x="558" y="533" width="1" height="269" fill="#A8A800"/><rect x="399" y="534" width="213" height="1" fill="#A8A800"/><rect x="399" y="561" width="213" height="1" fill="#A8A800"/><rect x="399" y="587" width="213" height="1" fill="#A8A800"/><rect x="399" y="614" width="213" height="1" fill="#A8A800"/><rect x="399" y="641" width="213" height="1" fill="#A8A800"/><rect x="399" y="667" width="213" height="1" fill="#A8A800"/><rect x="399" y="694" width="213" height="1" fill="#A8A800"/><rect x="399" y="721" width="213" height="1" fill="#A8A800"/><rect x="399" y="748" width="213" height="1" fill="#A8A800"/><rect x="399" y="774" width="213" height="1" fill="#A8A800"/><rect x="399" y="533" width="1" height="269" fill="#3A3E48"/><rect x="399" y="533" width="213" height="1" fill="#3A3E48"/><rect x="612" y="533" width="1" height="270" fill="#EEEEEE"/><rect x="399" y="802" width="214" height="1" fill="#EEEEEE"/></g><svg x="399" y="533" width="213" height="269" viewBox="399 533 213 269"><polyline points="406.0,608.5 409.5,611.0 414.4,617.5 420.0,627.0 426.6,639.5 431.5,650.0 436.3,661.5 440.0,672.0 443.7,684.0 446.3,695.0 448.5,707.5 450.0,720.0 451.0,734.0 451.6,746.0 452.2,758.5 452.8,770.0 453.3,777.5" fill="none" stroke="#00F8D0" stroke-width="5.5" stroke-linejoin="round" stroke-linecap="round" /><polyline points="453.0,779.6 481.0,779.2 482.0,778.0 534.0,778.0 537.0,781.8 557.0,781.8 575.0,781.2 589.3,781.5" fill="none" stroke="#00F8D0" stroke-width="2.0" stroke-linejoin="round" stroke-linecap="round" /><polyline points="402.5,610.0 403.0,616.0 404.5,623.0 408.0,631.0 414.4,641.5 420.5,652.5 426.6,663.5 431.8,675.0 436.3,686.0 440.3,698.0 443.7,710.0 445.8,722.0 447.3,734.5 448.5,747.0 449.4,759.0 450.0,770.0 450.5,781.5" fill="none" stroke="#FC0434" stroke-width="5.8" stroke-linejoin="round" stroke-linecap="round" /><rect x="400" y="608" width="6" height="6" fill="#FC0434"/><polyline points="450.5,782.6 481.0,782.4 483.0,780.8 533.0,780.8 537.0,784.4 587.8,784.4" fill="none" stroke="#FC0434" stroke-width="5.2" stroke-linejoin="round" stroke-linecap="round" /></svg></svg>
<div class="a" style="left:393px;top:534px;width:5px;height:1px;background:#000"></div>
<div class="a" style="left:393px;top:561px;width:5px;height:1px;background:#000"></div>
<div class="a" style="left:393px;top:587px;width:5px;height:1px;background:#000"></div>
<div class="a" style="left:393px;top:614px;width:5px;height:1px;background:#000"></div>
<div class="a" style="left:393px;top:641px;width:5px;height:1px;background:#000"></div>
<div class="a" style="left:393px;top:667px;width:5px;height:1px;background:#000"></div>
<div class="a" style="left:393px;top:694px;width:5px;height:1px;background:#000"></div>
<div class="a" style="left:393px;top:721px;width:5px;height:1px;background:#000"></div>
<div class="a" style="left:393px;top:748px;width:5px;height:1px;background:#000"></div>
<div class="a" style="left:393px;top:774px;width:5px;height:1px;background:#000"></div>
<div class="a" style="left:393px;top:801px;width:5px;height:1px;background:#000"></div>
<div class="a" style="left:400px;top:804px;width:1px;height:5px;background:#000"></div>
<div class="a" style="left:479px;top:804px;width:1px;height:5px;background:#000"></div>
<div class="a" style="left:558px;top:804px;width:1px;height:5px;background:#000"></div>
<div class="a" style="left:611px;top:804px;width:1px;height:5px;background:#000"></div>
<svg class="a" style="left:738px;top:545px" width="176" height="246" viewBox="738 545 176 246"><rect x="738" y="545" width="175" height="245" fill="#000"/><g shape-rendering="crispEdges"><rect x="745" y="545" width="1" height="245" fill="#5C5C00"/><rect x="752" y="545" width="1" height="245" fill="#5C5C00"/><rect x="758" y="545" width="1" height="245" fill="#5C5C00"/><rect x="765" y="545" width="1" height="245" fill="#5C5C00"/><rect x="771" y="545" width="1" height="245" fill="#5C5C00"/><rect x="778" y="545" width="1" height="245" fill="#5C5C00"/><rect x="784" y="545" width="1" height="245" fill="#5C5C00"/><rect x="791" y="545" width="1" height="245" fill="#5C5C00"/><rect x="797" y="545" width="1" height="245" fill="#5C5C00"/><rect x="810" y="545" width="1" height="245" fill="#5C5C00"/><rect x="817" y="545" width="1" height="245" fill="#5C5C00"/><rect x="824" y="545" width="1" height="245" fill="#5C5C00"/><rect x="830" y="545" width="1" height="245" fill="#5C5C00"/><rect x="837" y="545" width="1" height="245" fill="#5C5C00"/><rect x="843" y="545" width="1" height="245" fill="#5C5C00"/><rect x="850" y="545" width="1" height="245" fill="#5C5C00"/><rect x="856" y="545" width="1" height="245" fill="#5C5C00"/><rect x="863" y="545" width="1" height="245" fill="#5C5C00"/><rect x="869" y="545" width="1" height="245" fill="#5C5C00"/><rect x="876" y="545" width="1" height="245" fill="#5C5C00"/><rect x="882" y="545" width="1" height="245" fill="#5C5C00"/><rect x="889" y="545" width="1" height="245" fill="#5C5C00"/><rect x="896" y="545" width="1" height="245" fill="#5C5C00"/><rect x="902" y="545" width="1" height="245" fill="#5C5C00"/><rect x="909" y="545" width="1" height="245" fill="#5C5C00"/><rect x="738" y="550" width="175" height="1" fill="#5C5C00"/><rect x="738" y="555" width="175" height="1" fill="#5C5C00"/><rect x="738" y="560" width="175" height="1" fill="#5C5C00"/><rect x="738" y="570" width="175" height="1" fill="#5C5C00"/><rect x="738" y="575" width="175" height="1" fill="#5C5C00"/><rect x="738" y="581" width="175" height="1" fill="#5C5C00"/><rect x="738" y="591" width="175" height="1" fill="#5C5C00"/><rect x="738" y="596" width="175" height="1" fill="#5C5C00"/><rect x="738" y="601" width="175" height="1" fill="#5C5C00"/><rect x="738" y="611" width="175" height="1" fill="#5C5C00"/><rect x="738" y="616" width="175" height="1" fill="#5C5C00"/><rect x="738" y="621" width="175" height="1" fill="#5C5C00"/><rect x="738" y="631" width="175" height="1" fill="#5C5C00"/><rect x="738" y="636" width="175" height="1" fill="#5C5C00"/><rect x="738" y="642" width="175" height="1" fill="#5C5C00"/><rect x="738" y="652" width="175" height="1" fill="#5C5C00"/><rect x="738" y="657" width="175" height="1" fill="#5C5C00"/><rect x="738" y="662" width="175" height="1" fill="#5C5C00"/><rect x="738" y="672" width="175" height="1" fill="#5C5C00"/><rect x="738" y="677" width="175" height="1" fill="#5C5C00"/><rect x="738" y="682" width="175" height="1" fill="#5C5C00"/><rect x="738" y="692" width="175" height="1" fill="#5C5C00"/><rect x="738" y="697" width="175" height="1" fill="#5C5C00"/><rect x="738" y="703" width="175" height="1" fill="#5C5C00"/><rect x="738" y="713" width="175" height="1" fill="#5C5C00"/><rect x="738" y="718" width="175" height="1" fill="#5C5C00"/><rect x="738" y="723" width="175" height="1" fill="#5C5C00"/><rect x="738" y="733" width="175" height="1" fill="#5C5C00"/><rect x="738" y="738" width="175" height="1" fill="#5C5C00"/><rect x="738" y="743" width="175" height="1" fill="#5C5C00"/><rect x="738" y="753" width="175" height="1" fill="#5C5C00"/><rect x="738" y="758" width="175" height="1" fill="#5C5C00"/><rect x="738" y="764" width="175" height="1" fill="#5C5C00"/><rect x="738" y="774" width="175" height="1" fill="#5C5C00"/><rect x="738" y="779" width="175" height="1" fill="#5C5C00"/><rect x="738" y="784" width="175" height="1" fill="#5C5C00"/><rect x="804" y="545" width="1" height="245" fill="#A8A800"/><rect x="738" y="565" width="175" height="1" fill="#A8A800"/><rect x="738" y="586" width="175" height="1" fill="#A8A800"/><rect x="738" y="606" width="175" height="1" fill="#A8A800"/><rect x="738" y="626" width="175" height="1" fill="#A8A800"/><rect x="738" y="647" width="175" height="1" fill="#A8A800"/><rect x="738" y="667" width="175" height="1" fill="#A8A800"/><rect x="738" y="687" width="175" height="1" fill="#A8A800"/><rect x="738" y="708" width="175" height="1" fill="#A8A800"/><rect x="738" y="728" width="175" height="1" fill="#A8A800"/><rect x="738" y="748" width="175" height="1" fill="#A8A800"/><rect x="738" y="769" width="175" height="1" fill="#A8A800"/><rect x="738" y="545" width="1" height="245" fill="#3A3E48"/><rect x="738" y="545" width="175" height="1" fill="#3A3E48"/><rect x="913" y="545" width="1" height="246" fill="#EEEEEE"/><rect x="738" y="790" width="176" height="1" fill="#EEEEEE"/></g><svg x="738" y="545" width="175" height="245" viewBox="738 545 175 245"><rect x="738" y="789" width="175" height="1" fill="#E8E800" shape-rendering="crispEdges"/><polyline points="788.5,789.0 788.8,770.0 789.3,752.0 790.0,753.3 790.6,749.5 791.2,750.9 791.8,750.0 792.4,750.1 793.0,751.5 793.6,749.6 794.2,750.3 794.8,749.8 795.4,753.5 796.0,751.6 796.6,753.0 797.2,753.5 797.8,748.1 798.4,750.5 799.0,753.5 799.6,752.7 800.2,747.1 800.8,747.0 801.4,749.5 802.0,746.6 802.6,747.9 803.2,746.6 803.8,751.4 804.4,752.3 805.0,753.2 805.6,747.2 806.2,751.7 806.6,745.0 807.2,735.0 808.0,728.0 808.8,724.4 809.3,723.6 809.8,726.5 810.3,733.0 810.8,730.9 811.3,723.9 811.8,721.1 812.3,723.7 812.8,723.7 813.3,722.9 813.8,726.5 814.3,723.6 814.8,732.2 815.3,726.8 815.8,718.9 816.3,724.3 816.8,724.9 817.3,724.9 817.8,722.1 818.3,724.0 818.8,721.5 819.3,720.4 819.8,720.5 820.3,722.1 820.8,721.8 821.3,719.9 821.8,723.5 822.3,718.1 822.8,723.2 823.3,719.5 823.8,720.7 824.3,722.1 824.8,721.2 825.3,723.0 825.8,719.1 826.3,723.8 826.8,714.4 827.3,720.0 827.8,723.6 828.3,718.9 828.8,716.6 829.3,715.1 829.8,726.0 830.3,713.2 830.8,719.1 831.3,721.0 831.8,725.2 832.3,726.4 832.8,723.1 833.3,718.7 833.8,722.9 834.3,719.8 834.8,722.5 835.3,717.0 835.8,724.8 836.3,720.1 836.8,721.7 837.3,716.6 837.8,722.1 838.3,720.1 838.8,716.1 839.3,721.8 839.8,722.1 840.3,720.1 840.8,714.4 841.3,718.3 841.8,722.8 842.3,714.5 842.8,717.2 843.3,711.6 843.8,713.2 844.3,716.0 844.8,718.2 845.3,710.9 845.8,714.3 846.3,711.6 846.8,701.7 847.3,712.7 847.8,719.2 848.3,711.8 848.8,716.7 849.3,715.2 849.8,717.0 850.3,710.9 850.8,706.9 851.3,710.9 851.8,710.1 852.3,714.2 852.8,713.9 853.3,711.5 853.8,713.6 854.3,711.6 854.8,710.4 855.3,713.8 855.8,714.1 856.3,708.8 856.8,714.9 857.3,715.3 857.8,712.7 858.3,712.8 858.8,710.5 859.3,708.3 859.8,709.0 860.3,712.3 860.8,714.4 861.3,711.1 861.8,716.1 862.3,712.7 862.8,709.7 863.3,713.0 863.8,713.1 864.3,716.3 864.8,713.6 865.3,711.2 865.8,715.7 866.3,708.1 866.8,716.7 867.3,711.4 867.8,706.7 868.3,714.3 868.8,713.3 869.3,713.1 869.8,704.4 870.3,707.6 870.8,709.9 871.3,713.8 871.8,707.8 872.3,708.7 872.8,711.9 873.3,710.7 873.8,712.5 874.3,709.1 874.8,711.2 875.3,713.0 875.8,711.6 876.3,705.3 876.8,704.5 877.3,707.9 877.8,704.0 878.3,711.1 878.8,716.7 879.3,711.6 879.8,707.5 880.3,711.4 880.8,708.6 881.3,713.8 881.8,707.1 882.3,709.9 882.8,711.9 883.3,706.3 883.8,712.1 884.3,708.2 884.8,710.9 885.3,709.8 885.8,707.8 886.3,712.4 886.8,704.9 887.3,709.6 887.8,707.1 888.3,708.7 888.8,710.4 889.3,710.3 889.8,707.9 890.3,709.9 890.8,699.3 891.3,709.9 891.8,707.9 892.3,707.1" fill="none" stroke="#80FF20" stroke-width="1.35" stroke-linejoin="round" stroke-linecap="round" /><polyline points="739.0,786.5 788.0,786.5" fill="none" stroke="#FC0434" stroke-width="4" stroke-linejoin="round" stroke-linecap="round" /><polyline points="788.0,786.0 787.8,777.0 787.6,764.0" fill="none" stroke="#FC0434" stroke-width="1.3" stroke-linejoin="round" stroke-linecap="round" /><circle cx="787.8" cy="777.0" r="2.6" fill="#FC0434"/><circle cx="787.6" cy="764.0" r="2.6" fill="#FC0434"/><circle cx="787.8" cy="752.0" r="2.6" fill="#FC0434"/><circle cx="788.0" cy="742.0" r="2.6" fill="#FC0434"/><circle cx="788.3" cy="735.0" r="2.6" fill="#FC0434"/><circle cx="788.6" cy="728.5" r="2.6" fill="#FC0434"/><circle cx="789.0" cy="722.0" r="2.6" fill="#FC0434"/><circle cx="789.5" cy="716.0" r="2.6" fill="#FC0434"/><circle cx="790.3" cy="710.0" r="2.6" fill="#FC0434"/><polyline points="790.3,710.0 791.5,705.5 794.0,703.5 798.0,704.8 803.0,705.2 807.3,704.5" fill="none" stroke="#FC0434" stroke-width="5" stroke-linejoin="round" stroke-linecap="round" /><polyline points="807.3,704.5 807.3,668.0" fill="none" stroke="#FC0434" stroke-width="1.5" stroke-linejoin="round" stroke-linecap="round" /><circle cx="807.3" cy="676.0" r="2.8" fill="#FC0434"/><polyline points="807.3,668.0 808.5,662.1 810.5,655.7 813.0,652.8 817.0,648.7 822.7,644.0 828.0,639.6 832.4,636.3 837.0,633.1 841.0,630.4 844.6,628.9 847.0,626.8 849.5,630.3 854.4,632.2 859.0,629.9 862.0,627.2 866.6,624.4 871.0,620.4 875.0,617.1 878.8,613.5 882.0,616.0 886.0,614.2 889.5,612.7 893.0,609.7" fill="none" stroke="#FC0434" stroke-width="6.6" stroke-linejoin="round" stroke-linecap="round" /><circle cx="893.0" cy="609.3" r="3.2" fill="#FC0434"/><circle cx="890.5" cy="611.5" r="3.2" fill="#FC0434"/><circle cx="886.5" cy="612.5" r="3.2" fill="#FC0434"/><circle cx="879.0" cy="612.5" r="3.2" fill="#FC0434"/><circle cx="847.0" cy="625.5" r="3.2" fill="#FC0434"/></svg></svg>
<div class="a" style="left:732px;top:545px;width:5px;height:1px;background:#000"></div>
<div class="a" style="left:732px;top:565px;width:5px;height:1px;background:#000"></div>
<div class="a" style="left:732px;top:586px;width:5px;height:1px;background:#000"></div>
<div class="a" style="left:732px;top:606px;width:5px;height:1px;background:#000"></div>
<div class="a" style="left:732px;top:626px;width:5px;height:1px;background:#000"></div>
<div class="a" style="left:732px;top:647px;width:5px;height:1px;background:#000"></div>
<div class="a" style="left:732px;top:667px;width:5px;height:1px;background:#000"></div>
<div class="a" style="left:732px;top:687px;width:5px;height:1px;background:#000"></div>
<div class="a" style="left:732px;top:708px;width:5px;height:1px;background:#000"></div>
<div class="a" style="left:732px;top:728px;width:5px;height:1px;background:#000"></div>
<div class="a" style="left:732px;top:748px;width:5px;height:1px;background:#000"></div>
<div class="a" style="left:732px;top:769px;width:5px;height:1px;background:#000"></div>
<div class="a" style="left:732px;top:789px;width:5px;height:1px;background:#000"></div>
<div class="a" style="left:739px;top:792px;width:1px;height:5px;background:#000"></div>
<div class="a" style="left:804px;top:792px;width:1px;height:5px;background:#000"></div>
<div class="a" style="left:912px;top:792px;width:1px;height:5px;background:#000"></div>
<div class="t" style="left:318.80px;top:40.30px;font-size:15px;font-weight:700;letter-spacing:-0.114px;">Moderator growth sequence</div>
<div class="t" style="left:64.10px;top:58.84px;letter-spacing:0.015px;">1. Evaporate old moderator: switch off ion pump and coldhead,  opening pumpout valve,  warm cold head to</div>
<div class="t" style="left:700.40px;top:60.84px;letter-spacing:-0.746px;">70.00</div>
<div class="t" style="left:755.20px;top:60.84px;letter-spacing:-0.616px;">K</div>
<div class="t" style="left:64.10px;top:95.84px;letter-spacing:-0.103px;">2. Wait for</div>
<div class="t" style="left:139.00px;top:94.84px;letter-spacing:-0.717px;">400.00</div>
<div class="t" style="left:191.30px;top:95.84px;letter-spacing:-0.068px;">sec and restart ion pump and reset moderator setpoint to 5K</div>
<div class="t" style="left:64.10px;top:132.84px;letter-spacing:-0.149px;">3. Pump system for</div>
<div class="t" style="left:190.80px;top:132.84px;letter-spacing:-0.784px;">300.00</div>
<div class="t" style="left:242.70px;top:134.84px;letter-spacing:-0.096px;">sec and then restart cold head, and close roughing valve</div>
<div class="t" style="left:64.10px;top:170.84px;letter-spacing:0.028px;">4. Wait for cold head to cool down to</div>
<div class="t" style="left:291.60px;top:171.84px;letter-spacing:-0.815px;">7.50</div>
<div class="t" style="left:347.00px;top:172.84px;letter-spacing:-0.055px;">K and warm cold head up to</div>
<div class="t" style="left:507.60px;top:173.84px;letter-spacing:-0.740px;">7.80</div>
<div class="t" style="left:568.50px;top:173.84px;letter-spacing:-1.216px;">K</div>
<div class="t" style="left:419.70px;top:190.84px;letter-spacing:-0.015px;">coldhead takes ~25 min. to cool down from 70 K</div>
<div class="t" style="left:64.10px;top:208.84px;letter-spacing:-0.023px;">5. Allow temperature to stabilize for</div>
<div class="t" style="left:285.60px;top:209.84px;letter-spacing:-0.717px;">120.00</div>
<div class="t" style="left:337.30px;top:209.84px;letter-spacing:-0.896px;">sec</div>
<div class="t" style="left:64.10px;top:246.84px;letter-spacing:-0.071px;">6. Purge the neon gas feed line by opening the neon bypass valve. Switch off the ion pump.</div>
<div class="t" style="left:64.10px;top:284.84px;letter-spacing:-0.110px;">7. Open the neon  valve and admit neon at a rate of</div>
<div class="t" style="left:376.80px;top:285.84px;letter-spacing:-0.540px;">3.00</div>
<div class="t" style="left:433.30px;top:285.84px;letter-spacing:-0.232px;">SCCM. Close the neon bypass valve. Wait</div>
<div class="t" style="left:690.60px;top:284.84px;letter-spacing:-0.684px;">540.00</div>
<div class="t" style="left:742.70px;top:282.84px;letter-spacing:-1.900px;">s</div>
<div class="t" style="left:64.10px;top:322.84px;letter-spacing:-0.095px;">8. Switch off neon gas feed, and close the neon valve. switch on the ion gauge, and anneal at</div>
<div class="t" style="left:614.60px;top:322.84px;letter-spacing:-0.740px;">8.10</div>
<div class="t" style="left:668.40px;top:322.84px;letter-spacing:-0.189px;">K for</div>
<div class="t" style="left:711.50px;top:322.84px;letter-spacing:-0.727px;">1200.00</div>
<div class="t" style="left:762.50px;top:323.84px;letter-spacing:-0.796px;">sec</div>
<div class="t" style="left:64.10px;top:360.84px;letter-spacing:-0.154px;">9. Set the temperature to</div>
<div class="t" style="left:228.30px;top:361.84px;letter-spacing:-0.615px;">6.80</div>
<div class="t" style="left:280.30px;top:361.84px;letter-spacing:0.120px;">switch on the ion pump</div>
<div class="t" style="left:796.50px;top:22.84px;letter-spacing:-0.445px;">Source Pressure</div>
<div class="t" style="left:796.50px;top:37.34px;letter-spacing:0.131px;">[mbar]</div>
<div class="t" style="left:798.40px;top:59.84px;font-weight:700;letter-spacing:0.253px;">4.00E-9</div>
<div class="t" style="left:796.50px;top:81.84px;letter-spacing:-0.461px;">Trap Pressure</div>
<div class="t" style="left:796.50px;top:96.34px;letter-spacing:0.131px;">[mbar]</div>
<div class="t" style="left:798.40px;top:118.84px;font-weight:700;letter-spacing:0.253px;">1.00E-8</div>
<div class="t" style="left:796.50px;top:149.34px;letter-spacing:-0.034px;">Coldhead Temp</div>
<div class="t" style="left:796.50px;top:164.04px;letter-spacing:-0.191px;">[K]</div>
<div class="t" style="left:798.40px;top:186.84px;font-weight:700;letter-spacing:0.535px;">6.78</div>
<div class="t" style="left:837.50px;top:230.84px;font-weight:700;letter-spacing:-0.062px;">Moderator Status</div>
<div class="t" style="left:830.20px;top:251.84px;letter-spacing:0.048px;">Warming</div>
<div class="t" style="left:827.10px;top:277.84px;letter-spacing:-0.047px;">Roughing</div>
<div class="t" style="left:832.30px;top:296.84px;letter-spacing:0.061px;">Pumping</div>
<div class="t" style="left:837.50px;top:318.14px;letter-spacing:-0.015px;">Cooling</div>
<div class="t" style="left:798.20px;top:339.44px;letter-spacing:-0.026px;">Stabilizing temp</div>
<div class="t" style="left:800.20px;top:363.44px;letter-spacing:0.196px;">Admitting neon</div>
<div class="t" style="left:825.30px;top:381.84px;letter-spacing:-0.066px;">Annealing</div>
<div class="t" style="left:34.40px;top:440.84px;letter-spacing:-0.608px;">Dump &amp; GROW MODERATOR</div>
<div class="t" style="left:237.30px;top:440.84px;letter-spacing:0.041px;">Dump Only</div>
<div class="t" style="left:370.00px;top:440.84px;letter-spacing:0.368px;">Grow Only</div>
<div class="t" style="left:509.20px;top:439.23px;font-size:14.5px;letter-spacing:-1.021px;">COMPLETE</div>
<div class="t" style="left:658.40px;top:419.84px;letter-spacing:-0.309px;">Reset  all graphs</div>
<div class="t" style="left:756.30px;top:418.84px;letter-spacing:-0.132px;">Set all log times to</div>
<div class="t" style="left:875.00px;top:416.84px;letter-spacing:-0.430px;">60</div>
<div class="t" style="left:923.20px;top:418.84px;letter-spacing:-1.800px;">s</div>
<div class="t" style="left:659.40px;top:440.84px;letter-spacing:-0.111px;">Reset all graphs during growth?</div>
<div class="t" style="left:36.94px;top:541.04px;letter-spacing:-0.663px;">1.0E+1</div>
<div class="t" style="left:36.94px;top:565.56px;letter-spacing:-0.663px;">1.0E+0</div>
<div class="t" style="left:40.27px;top:590.08px;letter-spacing:-0.727px;">1.0E-1</div>
<div class="t" style="left:40.27px;top:614.60px;letter-spacing:-0.727px;">1.0E-2</div>
<div class="t" style="left:40.27px;top:639.12px;letter-spacing:-0.727px;">1.0E-3</div>
<div class="t" style="left:40.27px;top:663.64px;letter-spacing:-0.727px;">1.0E-4</div>
<div class="t" style="left:40.27px;top:688.16px;letter-spacing:-0.727px;">1.0E-5</div>
<div class="t" style="left:40.27px;top:712.68px;letter-spacing:-0.727px;">1.0E-6</div>
<div class="t" style="left:40.27px;top:737.20px;letter-spacing:-0.727px;">1.0E-7</div>
<div class="t" style="left:40.27px;top:761.72px;letter-spacing:-0.727px;">1.0E-8</div>
<div class="t" style="left:40.27px;top:786.24px;letter-spacing:-0.727px;">1.0E-9</div>
<div class="t" style="left:34.28px;top:810.76px;letter-spacing:-0.719px;">1.0E-10</div>
<div class="t" style="left:67.74px;top:825.14px;letter-spacing:-0.826px;">16:30</div>
<div class="t" style="left:107.14px;top:825.14px;letter-spacing:-0.826px;">16:45</div>
<div class="t" style="left:146.24px;top:825.14px;letter-spacing:-0.826px;">17:00</div>
<div class="t" style="left:185.24px;top:825.14px;letter-spacing:-0.826px;">17:15</div>
<div class="t" style="left:224.44px;top:825.14px;letter-spacing:-0.826px;">17:30</div>
<div class="t" style="left:278.54px;top:825.14px;letter-spacing:-0.826px;">17:50</div>
<div class="t" style="left:185.58px;top:841.84px;">Time</div>
<div class="t" style="left:22.50px;top:679.50px;transform:translate(-50%,-50%) rotate(-90deg);letter-spacing:-0.246px;">Pressure (mbar)</div>
<div class="t" style="left:364.27px;top:529.24px;letter-spacing:-0.826px;">100.0</div>
<div class="t" style="left:370.46px;top:555.97px;letter-spacing:-0.940px;">90.0</div>
<div class="t" style="left:370.46px;top:582.70px;letter-spacing:-0.940px;">80.0</div>
<div class="t" style="left:370.46px;top:609.43px;letter-spacing:-0.940px;">70.0</div>
<div class="t" style="left:370.46px;top:636.16px;letter-spacing:-0.940px;">60.0</div>
<div class="t" style="left:370.46px;top:662.89px;letter-spacing:-0.940px;">50.0</div>
<div class="t" style="left:370.46px;top:689.62px;letter-spacing:-0.940px;">40.0</div>
<div class="t" style="left:370.46px;top:716.35px;letter-spacing:-0.940px;">30.0</div>
<div class="t" style="left:370.46px;top:743.08px;letter-spacing:-0.940px;">20.0</div>
<div class="t" style="left:370.46px;top:769.81px;letter-spacing:-0.940px;">10.0</div>
<div class="t" style="left:376.37px;top:796.54px;letter-spacing:-1.029px;">0.0</div>
<div class="t" style="left:387.44px;top:810.84px;letter-spacing:-0.826px;">16:30</div>
<div class="t" style="left:375.03px;top:826.04px;letter-spacing:-0.232px;">5/30/2023</div>
<div class="t" style="left:466.34px;top:810.84px;letter-spacing:-0.826px;">17:00</div>
<div class="t" style="left:453.93px;top:826.04px;letter-spacing:-0.232px;">5/30/2023</div>
<div class="t" style="left:545.14px;top:810.84px;letter-spacing:-0.826px;">17:30</div>
<div class="t" style="left:532.73px;top:826.04px;letter-spacing:-0.232px;">5/30/2023</div>
<div class="t" style="left:598.24px;top:810.84px;letter-spacing:-0.826px;">17:50</div>
<div class="t" style="left:585.83px;top:826.04px;letter-spacing:-0.232px;">5/30/2023</div>
<div class="t" style="left:472.38px;top:843.14px;">Time</div>
<div class="t" style="left:353.20px;top:667.60px;transform:translate(-50%,-50%) rotate(-90deg);letter-spacing:-0.180px;">Temperature (K)</div>
<div class="t" style="left:701.11px;top:540.04px;letter-spacing:-0.995px;">12000</div>
<div class="t" style="left:701.28px;top:560.37px;letter-spacing:-0.817px;">11000</div>
<div class="t" style="left:701.11px;top:580.70px;letter-spacing:-0.995px;">10000</div>
<div class="t" style="left:706.50px;top:601.03px;letter-spacing:-0.901px;">9000</div>
<div class="t" style="left:706.50px;top:621.36px;letter-spacing:-0.901px;">8000</div>
<div class="t" style="left:706.50px;top:641.69px;letter-spacing:-0.901px;">7000</div>
<div class="t" style="left:706.50px;top:662.02px;letter-spacing:-0.901px;">6000</div>
<div class="t" style="left:706.50px;top:682.35px;letter-spacing:-0.901px;">5000</div>
<div class="t" style="left:706.50px;top:702.68px;letter-spacing:-0.901px;">4000</div>
<div class="t" style="left:706.50px;top:723.01px;letter-spacing:-0.901px;">3000</div>
<div class="t" style="left:706.50px;top:743.34px;letter-spacing:-0.901px;">2000</div>
<div class="t" style="left:706.50px;top:763.67px;letter-spacing:-0.901px;">1000</div>
<div class="t" style="left:723.81px;top:784.00px;letter-spacing:-0.888px;">0</div>
<div class="t" style="left:725.94px;top:798.64px;letter-spacing:-0.826px;">16:30</div>
<div class="t" style="left:713.53px;top:813.64px;letter-spacing:-0.232px;">5/30/2023</div>
<div class="t" style="left:791.24px;top:798.64px;letter-spacing:-0.826px;">17:00</div>
<div class="t" style="left:778.83px;top:813.64px;letter-spacing:-0.232px;">5/30/2023</div>
<div class="t" style="left:898.94px;top:798.64px;letter-spacing:-0.826px;">17:50</div>
<div class="t" style="left:886.53px;top:813.64px;letter-spacing:-0.232px;">5/30/2023</div>
<div class="t" style="left:816.18px;top:831.14px;">Time</div>
<div class="t" style="left:689.00px;top:668.00px;transform:translate(-50%,-50%) rotate(-90deg);letter-spacing:-0.103px;">Counts/sec</div>
</body></html>
